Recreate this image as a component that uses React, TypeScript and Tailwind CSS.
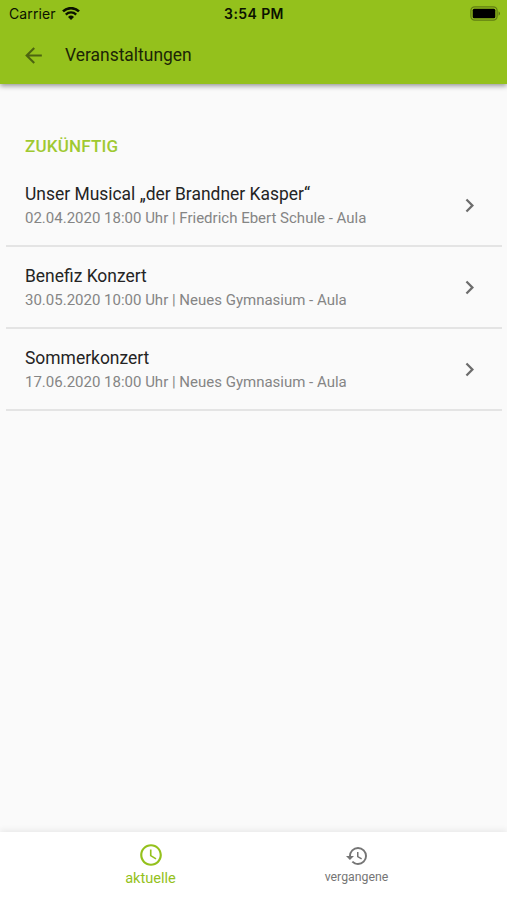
import React from "react";
import {
  MdAccessTime,
  MdArrowBack,
  MdChevronRight,
  MdHistory,
} from "react-icons/md";

const events = [
  {
    title: "Unser Musical „der Brandner Kasper“",
    info: "02.04.2020 18:00 Uhr | Friedrich Ebert Schule - Aula",
  },
  {
    title: "Benefiz Konzert",
    info: "30.05.2020 10:00 Uhr | Neues Gymnasium - Aula",
  },
  {
    title: "Sommerkonzert",
    info: "17.06.2020 18:00 Uhr | Neues Gymnasium - Aula",
  },
];

const WifiIcon = () => (
  <svg width="18" height="14" viewBox="0 0 18 14" fill="none" stroke="#0b1200">
    <path d="M1 4.4a11.5 11.5 0 0 1 16 0" strokeWidth="2.6" />
    <path d="M3.8 7.6a7.4 7.4 0 0 1 10.4 0" strokeWidth="2.3" />
    <path d="M6 10a4.3 4.3 0 0 1 6 0L9 13.1z" fill="#0b1200" stroke="none" />
  </svg>
);

const BatteryIcon = () => (
  <svg width="31" height="15" viewBox="0 0 31 15">
    <rect
      x="0.9"
      y="0.9"
      width="26.2"
      height="13.2"
      rx="3.8"
      fill="none"
      stroke="#000"
      strokeOpacity="0.35"
      strokeWidth="1.3"
    />
    <rect x="2.7" y="2.7" width="22.6" height="9.6" rx="1.5" fill="#000" />
    <path d="M28.6 5.2a2.7 2.7 0 0 1 0 4.6z" fill="#000" fillOpacity="0.45" />
  </svg>
);

const StatusBar = () => (
  <div className="grid h-[27px] grid-cols-3 items-center pl-[9px] pr-[6px] font-[Inter,sans-serif] text-[14px] text-[#0b1200]">
    <div className="flex items-center gap-[6px]">
      <span className="tracking-[0.1px]">Carrier</span>
      <WifiIcon />
    </div>
    <span className="-ml-[2px] text-center font-semibold tracking-[0.4px]">
      3:54 PM
    </span>
    <div className="flex justify-end">
      <BatteryIcon />
    </div>
  </div>
);

const EventRow = ({ title, info }: { title: string; info: string }) => (
  <li className="ml-[6px] mr-[5px] flex h-[82px] items-center border-b-2 border-[#e4e4e4] pl-[19px] pr-[19px]">
    <div className="flex flex-1 flex-col whitespace-nowrap pt-[2px]">
      <span className="text-[17.45px] leading-6 text-[#242424]">{title}</span>
      <span className="text-[15px] leading-6 text-[#858585]">{info}</span>
    </div>
    <MdChevronRight size={27} className="text-[#6c6c6c]" />
  </li>
);

export default function App() {
  return (
    <div className="flex h-[900px] w-[507px] flex-col overflow-hidden bg-[#fafafa] font-[Roboto,sans-serif]">
      <header className="z-10 h-[84px] bg-[#94c11c] shadow-[0_2px_5px_rgba(0,0,0,0.4)]">
        <StatusBar />
        <div className="flex h-[56px] items-center pl-[21px]">
          <MdArrowBack size={25} className="text-[#4c6410]" />
          <h1 className="ml-[19px] text-[17.45px] text-[#1c2506]">
            Veranstaltungen
          </h1>
        </div>
      </header>

      <main className="flex-1 pt-[49px]">
        <h2 className="pl-[25px] text-[17px] font-medium leading-[26px] tracking-[0.2px] text-[#9fc931]">
          ZUKÜNFTIG
        </h2>
        <ul className="mt-[6px]">
          {events.map((event) => (
            <EventRow key={event.title} {...event} />
          ))}
        </ul>
      </main>

      <nav className="flex h-[68px] justify-center bg-white shadow-[0_-2px_6px_rgba(0,0,0,0.07)]">
        <div className="flex w-[206px] flex-col items-center pt-[10px] text-[#94c11c]">
          <MdAccessTime size={26} />
          <span className="text-[14.6px] leading-5">aktuelle</span>
        </div>
        <div className="flex w-[206px] flex-col items-center pt-[12px] text-[#757575]">
          <MdHistory size={24} />
          <span className="text-[12.3px] leading-[18px]">vergangene</span>
        </div>
      </nav>
    </div>
  );
}
